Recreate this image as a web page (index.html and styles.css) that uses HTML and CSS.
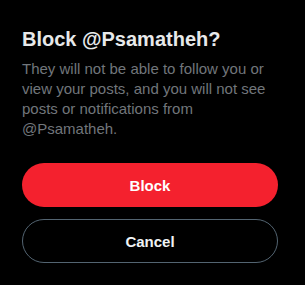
FILE: index.html
```html
<!DOCTYPE html>
<html>
<head>
<meta charset="utf-8">
<link rel="stylesheet" href="styles.css">
</head>
<body>
<div class="dialog">
  <h1 class="title">Block @Psamatheh?</h1>
  <p class="desc">They will not be able to follow you or view your posts, and you will not see posts or notifications from @Psamatheh.</p>
  <div class="actions">
    <button class="btn btn-block">Block</button>
    <button class="btn btn-cancel">Cancel</button>
  </div>
</div>
</body>
</html>
```

FILE: styles.css
```css
html, body {
  margin: 0;
  padding: 0;
  background: #000;
  height: 100%;
}
body {
  font-family: "Liberation Sans", Arial, sans-serif;
}
.dialog {
  width: 256px;
  padding: 27px 0 0 22px;
}
.title {
  margin: 0;
  font-size: 20px;
  line-height: 24px;
  font-weight: 700;
  color: #e7e9ea;
}
.desc {
  margin: 8px 0 0;
  font-size: 15px;
  line-height: 20px;
  color: #71767b;
}
.actions {
  margin-top: 24px;
  display: flex;
  flex-direction: column;
  gap: 12px;
}
.btn {
  height: 44px;
  border-radius: 22px;
  font-family: inherit;
  font-size: 15px;
  font-weight: 700;
  cursor: pointer;
}
.btn-block {
  background: #f4212e;
  border: none;
  color: #fff;
}
.btn-cancel {
  background: transparent;
  border: 1px solid #536471;
  color: #eff3f4;
}
```
